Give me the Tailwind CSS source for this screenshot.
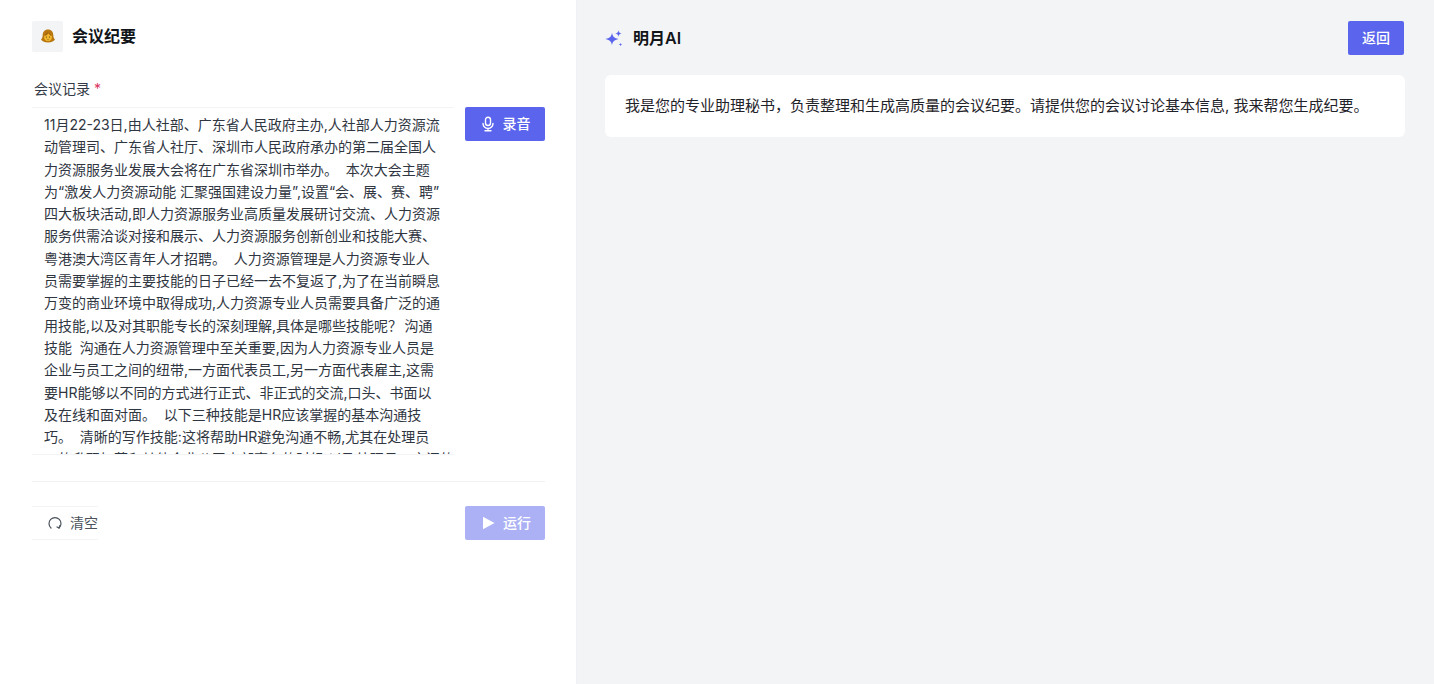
<!DOCTYPE html>
<html lang="zh">
<head>
<meta charset="utf-8">
<script src="https://cdn.jsdelivr.net/npm/@tailwindcss/browser@4"></script>
</head>
<body class="h-[684px] overflow-hidden bg-white font-['Inter','Noto_Sans_CJK_SC',sans-serif] text-[#1f2329]">
<div class="flex h-[684px]">
  <section class="flex h-full w-[577px] shrink-0 flex-col border-r border-[#f0f1f4] bg-white pl-8 pr-[31px] pt-[21px]">
    <header class="flex h-[30px] items-center gap-[9px]">
      <div class="flex size-[31px] items-center justify-center rounded-[2px] bg-[#f3f4f6]">
        <svg viewBox="0 0 16 16" class="size-4">
          <path d="M8 1.500c3.500 0 5.300 2.500 5.300 5.500 0 2 .8 3.500 1.700 4.500-1.200 2-4 3-7 3s-5.800-1-7-3c.9-1 1.700-2.500 1.700-4.500 0-3 1.800-5.500 5.300-5.500z" fill="#b9780f"/>
          <circle cx="8" cy="9" r="3.900" fill="#f2b92e"/>
          <path d="M4.200 8C6 7.700 7.800 6.500 8.500 5.200c.6 1.300 1.800 2.400 3.300 2.800-.4-2-1.800-3.400-3.800-3.400S4.600 6 4.200 8z" fill="#a8680a"/>
          <circle cx="6.500" cy="9" r=".6" fill="#5b3a0a"/>
          <circle cx="9.500" cy="9" r=".6" fill="#5b3a0a"/>
          <path d="M6.800 11.100c.8.500 1.600.5 2.400 0" stroke="#8a5a10" stroke-width=".5" fill="none"/>
        </svg>
      </div>
      <h1 class="text-base font-semibold leading-6 text-[#111418]">会议纪要</h1>
    </header>
    <div class="mt-[27px] flex h-[22px] items-center pl-0.5 text-sm text-[#333a45]">
      会议记录<span class="ml-1 text-[#d9345f]">*</span>
    </div>
    <div class="mt-[7px] flex items-start gap-[11px]">
      <div class="h-[348px] w-[422px] shrink-0 overflow-hidden border-y border-[#f3f4f6] pl-3 pt-[6px] text-sm leading-[22.3px] whitespace-nowrap text-[#30363f]">
        11月22-23日,由人社部、广东省人民政府主办,人社部人力资源流<br>
        动管理司、广东省人社厅、深圳市人民政府承办的第二届全国人<br>
        力资源服务业发展大会将在广东省深圳市举办。 &nbsp;本次大会主题<br>
        为“激发人力资源动能 汇聚强国建设力量”,设置“会、展、赛、聘”<br>
        四大板块活动,即人力资源服务业高质量发展研讨交流、人力资源<br>
        服务供需洽谈对接和展示、人力资源服务创新创业和技能大赛、<br>
        粤港澳大湾区青年人才招聘。 &nbsp;人力资源管理是人力资源专业人<br>
        员需要掌握的主要技能的日子已经一去不复返了,为了在当前瞬息<br>
        万变的商业环境中取得成功,人力资源专业人员需要具备广泛的通<br>
        用技能,以及对其职能专长的深刻理解,具体是哪些技能呢？&thinsp;沟通<br>
        技能 &nbsp;沟通在人力资源管理中至关重要,因为人力资源专业人员是<br>
        企业与员工之间的纽带,一方面代表员工,另一方面代表雇主,这需<br>
        要HR能够以不同的方式进行正式、非正式的交流,口头、书面以<br>
        及在线和面对面。 &nbsp;以下三种技能是HR应该掌握的基本沟通技<br>
        巧。 &nbsp;清晰的写作技能:这将帮助HR避免沟通不畅,尤其在处理员<br>
        工的升职加薪和其他企业公司内部事务的时候,以及处理员工之间的
      </div>
      <button class="flex h-[34px] w-20 items-center justify-center gap-[7px] rounded-[2px] bg-[#5a64ec] text-sm font-medium text-white">
        <svg viewBox="0 0 16 16" class="size-4" fill="none" stroke="currentColor" stroke-width="1.400" stroke-linecap="round">
          <rect x="5.500" y="1.200" width="5" height="8.300" rx="2.500"/>
          <path d="M3 7.500a5 5 0 0 0 10 0M8 12.500v2.300M5 14.800h6"/>
        </svg>
        录音
      </button>
    </div>
    <div class="mt-[26px] border-t border-[#f1f2f4]"></div>
    <div class="mt-6 flex items-start justify-between">
      <button class="flex h-[34px] w-[66px] items-center gap-2 border-y border-[#f3f4f6] pl-4 text-sm text-[#4b525c]">
        <svg viewBox="0 0 14 14" class="size-[14px]" fill="none" stroke="currentColor" stroke-width="1.200" stroke-linecap="round">
          <path d="M3 12A6 6 0 1 1 11 12"/>
          <path d="M11.800 9.600 11 12 9 11"/>
        </svg>
        清空
      </button>
      <button class="flex h-[34px] w-20 items-center justify-center gap-2 rounded-[2px] bg-[#abb1f4] pl-0.5 text-sm font-medium text-white">
        <svg viewBox="0 0 14 14" class="size-[14px]" fill="currentColor"><path d="M2 .8 13.500 7 2 13.200z"/></svg>
        运行
      </button>
    </div>
  </section>
  <main class="flex-1 bg-[#f3f4f6] pl-7 pr-[29px] pt-[21px]">
    <header class="flex h-[34px] items-center justify-between pr-px">
      <div class="flex items-center gap-2.5">
        <svg viewBox="0 0 18 18" class="size-[18px]" fill="#5a64ec">
          <path d="M7 3.500C7.500 7.500 9 9 13.500 10 9 11 7.500 12.500 7 16.500 6.500 12.500 5 11 .5 10 5 9 6.500 7.500 7 3.500z"/>
          <path d="M13.500 1.200c.3 2 1 2.900 3.200 3.300-2.200.4-2.900 1.300-3.200 3.300-.3-2-1-2.900-3.200-3.300 2.200-.4 2.900-1.300 3.200-3.300z"/>
          <path d="M15.500 13.700c.2 1.100.6 1.600 1.800 1.800-1.200.2-1.600.7-1.800 1.800-.2-1.100-.6-1.600-1.800-1.800 1.200-.2 1.600-.7 1.800-1.800z"/>
        </svg>
        <h2 class="text-base font-semibold text-[#111418]">明月AI</h2>
      </div>
      <button class="h-[34px] w-14 rounded-[2px] bg-[#5a64ec] text-sm font-medium text-white">返回</button>
    </header>
    <div class="mt-5 flex h-[62px] items-center rounded-md bg-white px-5 text-[15px] text-[#1f2329]">
      我是您的专业助理秘书，负责整理和生成高质量的会议纪要。请提供您的会议讨论基本信息, 我来帮您生成纪要。
    </div>
  </main>
</div>
</body>
</html>
